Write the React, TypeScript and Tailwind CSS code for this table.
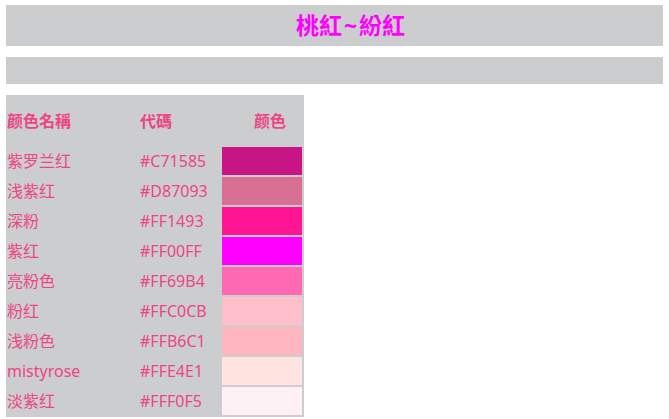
const colors = [
  { name: '紫罗兰红', code: '#C71585' },
  { name: '浅紫红', code: '#D87093' },
  { name: '深粉', code: '#FF1493' },
  { name: '紫红', code: '#FF00FF' },
  { name: '亮粉色', code: '#FF69B4' },
  { name: '粉红', code: '#FFC0CB' },
  { name: '浅粉色', code: '#FFB6C1' },
  { name: 'mistyrose', code: '#FFE4E1' },
  { name: '淡紫红', code: '#FFF0F5' },
]

const App = () => {
  return (
    <div className="px-[6px] pt-[5px] font-['Noto_Sans','Noto_Sans_CJK_TC',sans-serif] bg-white min-h-[419px]">
      <div className="h-[41px] bg-[#CCCDCF] flex items-center justify-center pl-[32px] text-[23px] font-bold text-[#FF00FF]">
        桃紅<span className="px-[2px]">~</span>紛紅
      </div>

      <div className="mt-[11px] h-[27px] bg-[#CCCDCF]"></div>

      <div className="mt-[11px] w-[298px] bg-[#CCCDCF] text-[#EC4585] text-[16px] pb-px">
        <div className="grid grid-cols-[133px_82px_83px] h-[51px] items-center font-bold pl-px">
          <div>颜色名稱</div>
          <div>代碼</div>
          <div className="pl-[32px]">颜色</div>
        </div>
        {colors.map((c) => (
          <div key={c.code} className="grid grid-cols-[133px_82px_80px] h-[30px] items-center pl-px">
            <div className="leading-none">{c.name}</div>
            <div className="leading-none">{c.code}</div>
            <div className="h-[28px]" style={{ backgroundColor: c.code }}></div>
          </div>
        ))}
      </div>
    </div>
  )
}

export default App
